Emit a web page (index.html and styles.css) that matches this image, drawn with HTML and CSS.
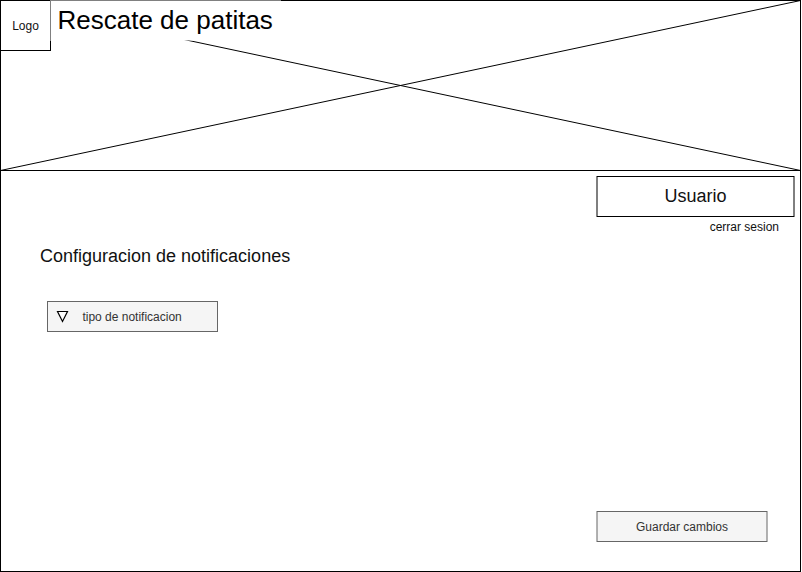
FILE: index.html
```html
<!DOCTYPE html>
<html lang="es">
<head>
<meta charset="utf-8">
<title>Rescate de patitas</title>
<link rel="stylesheet" href="styles.css">
</head>
<body>
<div class="page">
  <header class="banner">
    <svg class="cross" width="801" height="171" viewBox="0 0 801 171" aria-hidden="true">
      <path d="M0.5 0.5L800.5 170.5M800.5 0.5L0.5 170.5"/>
    </svg>
    <div class="logo">Logo</div>
    <h1 class="title">Rescate de patitas</h1>
  </header>
  <main class="content">
    <div class="account">
      <div class="box user">
        <svg class="outline" width="199" height="41" aria-hidden="true"><rect x="1" y="0.5" width="197" height="40"/></svg>
        <span>Usuario</span>
      </div>
      <a class="logout">cerrar sesion</a>
    </div>
    <h2 class="heading">Configuracion de notificaciones</h2>
    <div class="select">
      <svg class="arrow" width="14" height="14" viewBox="0 0 14 14" aria-hidden="true"><path d="M1.5 1.5H11.5L6.5 11.5Z"/></svg>
      <span>tipo de notificacion</span>
    </div>
    <div class="box save">
      <svg class="outline" width="172" height="31" aria-hidden="true"><rect x="1" y="0.5" width="170" height="30"/></svg>
      <span>Guardar cambios</span>
    </div>
  </main>
</div>
</body>
</html>
```
FILE: styles.css
```css
* { box-sizing: border-box; }
body {
  margin: 0;
  background: #fff;
  color: #111;
  font-family: "Liberation Sans", Arial, sans-serif;
  font-size: 12px;
}
.page {
  width: 801px;
  height: 572px;
  border: 1px solid #000;
  display: flex;
  flex-direction: column;
}
.banner {
  position: relative;
  display: flex;
  align-items: flex-start;
  width: 801px;
  height: 171px;
  margin: -1px 0 0 -1px;
  border: 1px solid #000;
  flex: none;
}
.cross {
  position: absolute;
  left: -1px;
  top: -1px;
  fill: none;
  stroke: #000;
}
.logo {
  position: relative;
  width: 51px;
  height: 51px;
  margin: -1px 0 0 -1px;
  border: 1px solid #000;
  background: #fff;
  line-height: 50px;
  text-align: center;
}
.title {
  position: relative;
  width: 231px;
  height: 41px;
  margin: -1px 0 0 -1px;
  padding-left: 6.5px;
  border: 1px solid rgba(255, 255, 255, 0.5);
  background: #fff padding-box;
  color: #000;
  font-size: 26px;
  font-weight: 400;
  line-height: 38px;
  white-space: nowrap;
}
.content {
  flex: 1;
  display: flex;
  flex-direction: column;
  align-items: flex-start;
  padding: 5px 5px 29px 0;
}
.account {
  align-self: flex-end;
  display: flex;
  flex-direction: column;
  align-items: flex-end;
}
.box {
  position: relative;
  display: flex;
  align-items: center;
  justify-content: center;
}
.outline {
  position: absolute;
  inset: 0;
  fill: #fff;
  stroke: #000;
}
.box span { position: relative; }
.user {
  width: 199px;
  height: 41px;
  font-size: 18px;
}
.logout {
  margin: 3px 16px 0 0;
  line-height: 14px;
}
.heading {
  margin: 11px 0 0 39px;
  font-size: 18px;
  font-weight: 400;
  line-height: 22px;
}
.select {
  display: flex;
  align-items: center;
  width: 171px;
  height: 31px;
  margin: 34px 0 0 46px;
  padding-left: 8px;
  border: 1px solid #666;
  background: #f5f5f5;
  color: #333;
}
.arrow {
  margin-right: 12.4px;
  fill: #fff;
  stroke: #000;
  stroke-width: 1.2;
}
.save {
  align-self: flex-end;
  width: 172px;
  height: 31px;
  margin: auto 27px 0 0;
  color: #333;
}
.save .outline { fill: #f5f5f5; stroke: #666; }
```
